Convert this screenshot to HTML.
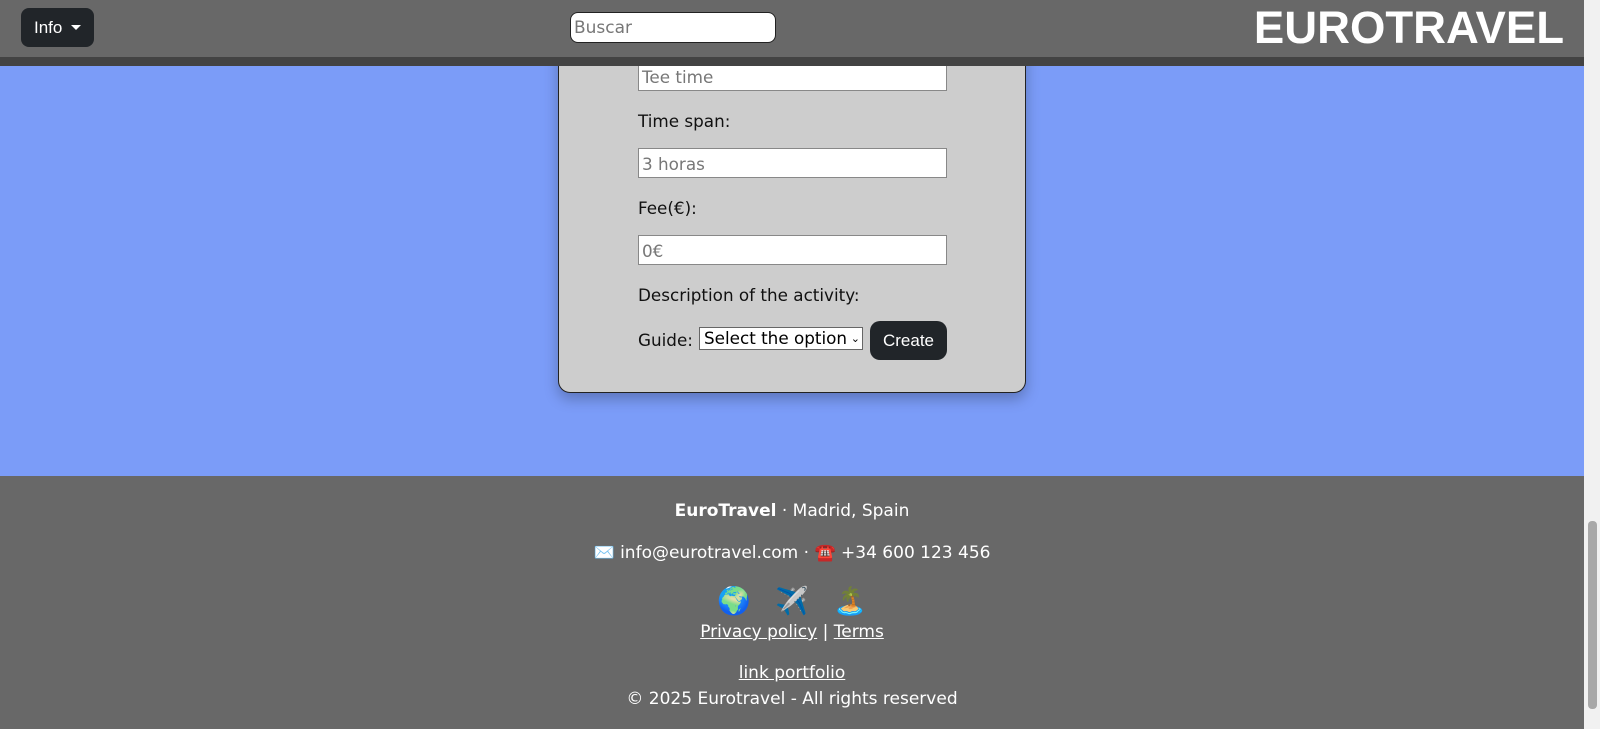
<!DOCTYPE html>
<html><head><meta charset="utf-8"><style>
*{box-sizing:border-box;margin:0;padding:0}
body{width:1600px;height:729px;overflow:hidden;background:#7b9cf8;font-family:"DejaVu Sans",Verdana,sans-serif;position:relative}
.a{position:absolute}
#hdr{left:0;top:0;width:1584px;height:57px;background:#686868}
#band{left:0;top:57px;width:1584px;height:9px;background:#434343}
#info{left:21px;top:8px;width:73px;height:39px;background:#212529;border-radius:8px;color:#fff;font-family:"Liberation Sans",sans-serif;font-size:17px;line-height:39px;padding-left:13px}
#info:after{content:"";position:absolute;left:50px;top:17px;border-left:5px solid transparent;border-right:5px solid transparent;border-top:5px solid #fff}
#srch{left:570px;top:12px;width:206px;height:31px;background:#fff;border-radius:8px;border:1px solid #222;color:#777;font-size:17px;line-height:31px;padding-left:3px}
#logo{right:36px;top:2px;color:#fff;font-family:"Liberation Sans",sans-serif;font-weight:bold;font-size:45.5px;line-height:52px}
#card{left:558px;top:30px;width:468px;height:363px;background:#cdcdcd;border:1.5px solid #222;border-radius:12px;box-shadow:0 6px 14px rgba(0,0,0,.25)}
.in{left:638px;width:309px;height:30px;background:#fff;border:1px solid #888;color:#777;font-size:16.8px;line-height:30px;padding-left:3px}
.lb{left:638px;font-size:16.8px;color:#111;line-height:20px}
#sel{left:699px;top:327px;width:164px;height:23px;background:#fff;border:1px solid #666;font-size:16.8px;line-height:21px;padding-left:4px;color:#000;white-space:nowrap;overflow:hidden}
#btn{left:870px;top:321px;width:77px;height:39px;background:#212529;border-radius:10px;color:#fff;font-family:"Liberation Sans",sans-serif;font-size:17px;line-height:39px;text-align:center}
#ftr{left:0;top:476px;width:1584px;height:253px;background:#686868}
.ft{left:0;width:1584px;text-align:center;color:#fff;font-size:17px;line-height:20px}
.ft u{text-decoration:underline}
#sb{left:1584px;top:0;width:16px;height:729px;background:#f1f1f1}
#th{left:1588px;top:521px;width:9px;height:188px;background:#a8a8a8;border-radius:4px}
</style></head><body>
<div class="a" id="card"></div>
<div class="a in" style="top:61px">Tee time</div>
<div class="a lb" style="top:111px">Time span:</div>
<div class="a in" style="top:148px">3 horas</div>
<div class="a lb" style="top:198px">Fee(€):</div>
<div class="a in" style="top:235px">0€</div>
<div class="a lb" style="top:285px">Description of the activity:</div>
<div class="a lb" style="top:330px">Guide:</div>
<div class="a" id="sel">Select the option<span style="position:absolute;right:2px;top:0;font-size:11px;background:#fff">⌄</span></div>
<div class="a" id="btn">Create</div>
<div class="a" id="hdr"></div>
<div class="a" id="band"></div>
<div class="a" id="info">Info</div>
<div class="a" id="srch">Buscar</div>
<div class="a" id="logo">EUROTRAVEL</div>
<div class="a" id="ftr"></div>
<div class="a ft" style="top:501px"><b>EuroTravel</b> · Madrid, Spain</div>
<div class="a ft" style="top:543px">✉️ info@eurotravel.com · ☎️ +34 600 123 456</div>
<div class="a ft" style="top:586px;font-size:27px;line-height:32px;word-spacing:16px">🌍 ✈️ 🏝️</div>
<div class="a ft" style="top:622px"><u>Privacy policy</u> | <u>Terms</u></div>
<div class="a ft" style="top:663px"><u>link portfolio</u></div>
<div class="a ft" style="top:689px">© 2025 Eurotravel - All rights reserved</div>
<div class="a" id="sb"></div>
<div class="a" id="th"></div>
</body></html>
